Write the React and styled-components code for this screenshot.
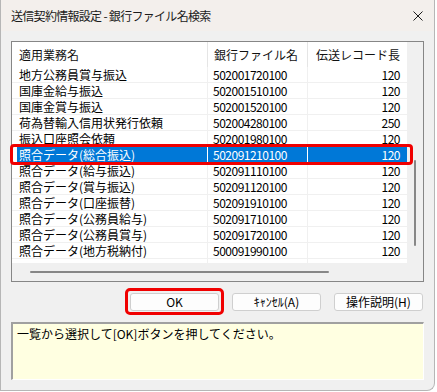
import React from "react";
import styled, { createGlobalStyle } from "styled-components";

const GlobalStyle = createGlobalStyle`
	body {
		margin: 0;
		background: #ffffff;
		font-family: "Noto Sans CJK JP", "Noto Sans", sans-serif;
		font-size: 12px;
		color: #000;
	}
`;

const rows = [
	["地方公務員賞与振込", "502001720100", "120"],
	["国庫金給与振込", "502001510100", "120"],
	["国庫金賞与振込", "502001520100", "120"],
	["荷為替輸入信用状発行依頼", "502004280100", "250"],
	["振込口座照会依頼", "502001980100", "120"],
	["照合データ(総合振込)", "502091210100", "120"],
	["照合データ(給与振込)", "502091110100", "120"],
	["照合データ(賞与振込)", "502091120100", "120"],
	["照合データ(口座振替)", "502091910100", "120"],
	["照合データ(公務員給与)", "502091710100", "120"],
	["照合データ(公務員賞与)", "502091720100", "120"],
	["照合データ(地方税納付)", "500091990100", "120"],
];

const SELECTED = 5;

const App = () => {
	return (
		<>
			<GlobalStyle />
			<Window>
				<TitleBar>
					<Title>送信契約情報設定 - 銀行ファイル名検索</Title>
					<Close width="10" height="10" viewBox="0 0 10 10">
						<path d="M0.5 0.5 L9.5 9.5 M9.5 0.5 L0.5 9.5" stroke="#1c1c1c" strokeWidth="1" fill="none" />
					</Close>
				</TitleBar>
				<Body>
					<ListBox>
						<Content>
							<HeaderRow>
								<HeadCell>適用業務名</HeadCell>
								<HeadCell>銀行ファイル名</HeadCell>
								<HeadCell $right $last>伝送レコード長</HeadCell>
							</HeaderRow>
							{rows.map((r, i) => (
								<Row key={r[1]} $sel={i === SELECTED}>
									<Cell $first $sel={i === SELECTED}>{r[0]}</Cell>
									<Cell $num $sel={i === SELECTED}>{r[1]}</Cell>
									<Cell $num $right $last $sel={i === SELECTED}>{r[2]}</Cell>
								</Row>
							))}
							<Filler>
								<span />
								<span />
								<span />
							</Filler>
						</Content>
						<VTrack>
							<VThumb />
						</VTrack>
						<HTrack>
							<HThumb />
						</HTrack>
						<Corner />
					</ListBox>
					<ButtonRow>
						<Button $marked>OK</Button>
						<Button>ｷｬﾝｾﾙ(A)</Button>
						<Button>操作説明(H)</Button>
					</ButtonRow>
					<Message>一覧から選択して[OK]ボタンを押してください。</Message>
				</Body>
			</Window>
		</>
	);
};

const Window = styled.div`
	width: 435px;
	height: 391px;
	box-sizing: border-box;
	border: 1px solid #b6b6b6;
	border-top: none;
	border-radius: 0 0 8px 0;
	background: #f0f0f0;
	display: flex;
	flex-direction: column;
	overflow: hidden;
`;

const TitleBar = styled.div`
	height: 31px;
	flex: none;
	background: #f3efec;
	display: flex;
	align-items: center;
	justify-content: space-between;
	padding: 0 10px 0 10px;
`;

const Title = styled.div`
	font-size: 12px;
	letter-spacing: -0.7px;
	color: #1b1b1b;
	line-height: 16px;
`;

const Close = styled.svg`
	display: block;
	margin-right: 1px;
`;

const Body = styled.div`
	flex: 1;
	display: flex;
	flex-direction: column;
	padding: 10px 10px 10px 10px;
`;

const ListBox = styled.div`
	height: 241px;
	box-sizing: border-box;
	border: 1px solid #868686;
	background: #fff;
	display: grid;
	grid-template-columns: 395px 16px;
	grid-template-rows: 221px 18px;
`;

const Content = styled.div`
	display: flex;
	flex-direction: column;
`;

const cols = "196px 100px 99px";

const HeaderRow = styled.div`
	display: grid;
	grid-template-columns: ${cols};
	height: 25px;
`;

const HeadCell = styled.div`
	display: flex;
	align-items: center;
	justify-content: ${(p) => (p.$right ? "flex-end" : "flex-start")};
	padding: 0 7px 0 ${(p) => (p.$right ? "0" : "6px")};
	border-right: ${(p) => (p.$last ? "none" : "1px solid #e5e5e5")};
	font-size: 12px;
	line-height: 16px;
	color: #111;
	&:first-child {
		padding-left: 7px;
	}
`;

const Row = styled.div`
	display: grid;
	grid-template-columns: ${cols};
	height: 16px;
	position: relative;

	${(p) =>
		p.$sel &&
		`
		&::after {
			content: "";
			position: absolute;
			z-index: 2;
			left: -2px;
			right: -6px;
			top: -3px;
			bottom: -2px;
			border: 3px solid #f00000;
			border-radius: 4px;
			pointer-events: none;
		}
	`}
`;

const Cell = styled.div`
	box-sizing: border-box;
	height: 16px;
	line-height: 15px;
	white-space: nowrap;
	overflow: hidden;
	padding: 0 7px 0 ${(p) => (p.$first ? "7px" : p.$right ? "0" : "5px")};
	text-align: ${(p) => (p.$right ? "right" : "left")};
	letter-spacing: ${(p) => (p.$num ? "-0.5px" : "0")};
	border-bottom: 1px solid ${(p) => (p.$sel ? "#0078d7" : "#f0f0f0")};
	border-right: ${(p) => (p.$last ? "none" : `1px solid ${p.$sel ? "#ffffff" : "#f0f0f0"}`)};
	background: ${(p) => (p.$sel ? "#0078d7" : "#fff")};
	color: ${(p) => (p.$sel ? "#fff" : "#000")};
	box-shadow: ${(p) => (p.$sel && p.$first ? "inset 5px 0 0 #ffffff" : "none")};
`;

const Filler = styled.div`
	display: grid;
	grid-template-columns: ${cols};
	height: 4px;
	& > span {
		border-right: 1px solid #f0f0f0;
	}
	& > span:last-child {
		border-right: none;
	}
`;

const VTrack = styled.div`
	background: #f0f0f0;
	position: relative;
`;

const VThumb = styled.div`
	position: absolute;
	left: 7px;
	top: 118px;
	width: 2px;
	height: 86px;
	border-radius: 1px;
	background: #878787;
`;

const HTrack = styled.div`
	background: #f0f0f0;
	position: relative;
`;

const HThumb = styled.div`
	position: absolute;
	left: 18px;
	top: 8px;
	width: 299px;
	height: 2px;
	border-radius: 1px;
	background: #878787;
`;

const Corner = styled.div`
	background: #f0f0f0;
`;

const ButtonRow = styled.div`
	display: flex;
	justify-content: flex-end;
	gap: 13px;
	margin: 11px 1px 0 0;
`;

const Button = styled.div`
	position: relative;
	width: 89px;
	height: 18px;
	box-sizing: border-box;
	border: 1px solid #cfcfcf;
	border-radius: 3px;
	background: #fdfdfd;
	display: flex;
	align-items: center;
	justify-content: center;
	font-size: 12px;
	line-height: 14px;
	color: #000;

	${(p) =>
		p.$marked &&
		`
		&::after {
			content: "";
			position: absolute;
			left: -6px;
			right: -6px;
			top: -6px;
			bottom: -5px;
			border: 3px solid #f00000;
			border-radius: 5px;
		}
	`}
`;

const Message = styled.div`
	margin-top: 11px;
	height: 58px;
	box-sizing: border-box;
	border-top: 2px solid #a0a0a0;
	border-left: 2px solid #a0a0a0;
	border-right: 1px solid #ffffff;
	border-bottom: 1px solid #ffffff;
	background: #ffffe1;
	padding: 2px 4px;
	font-size: 12px;
	line-height: 16px;
	color: #000;
`;

export default App;
